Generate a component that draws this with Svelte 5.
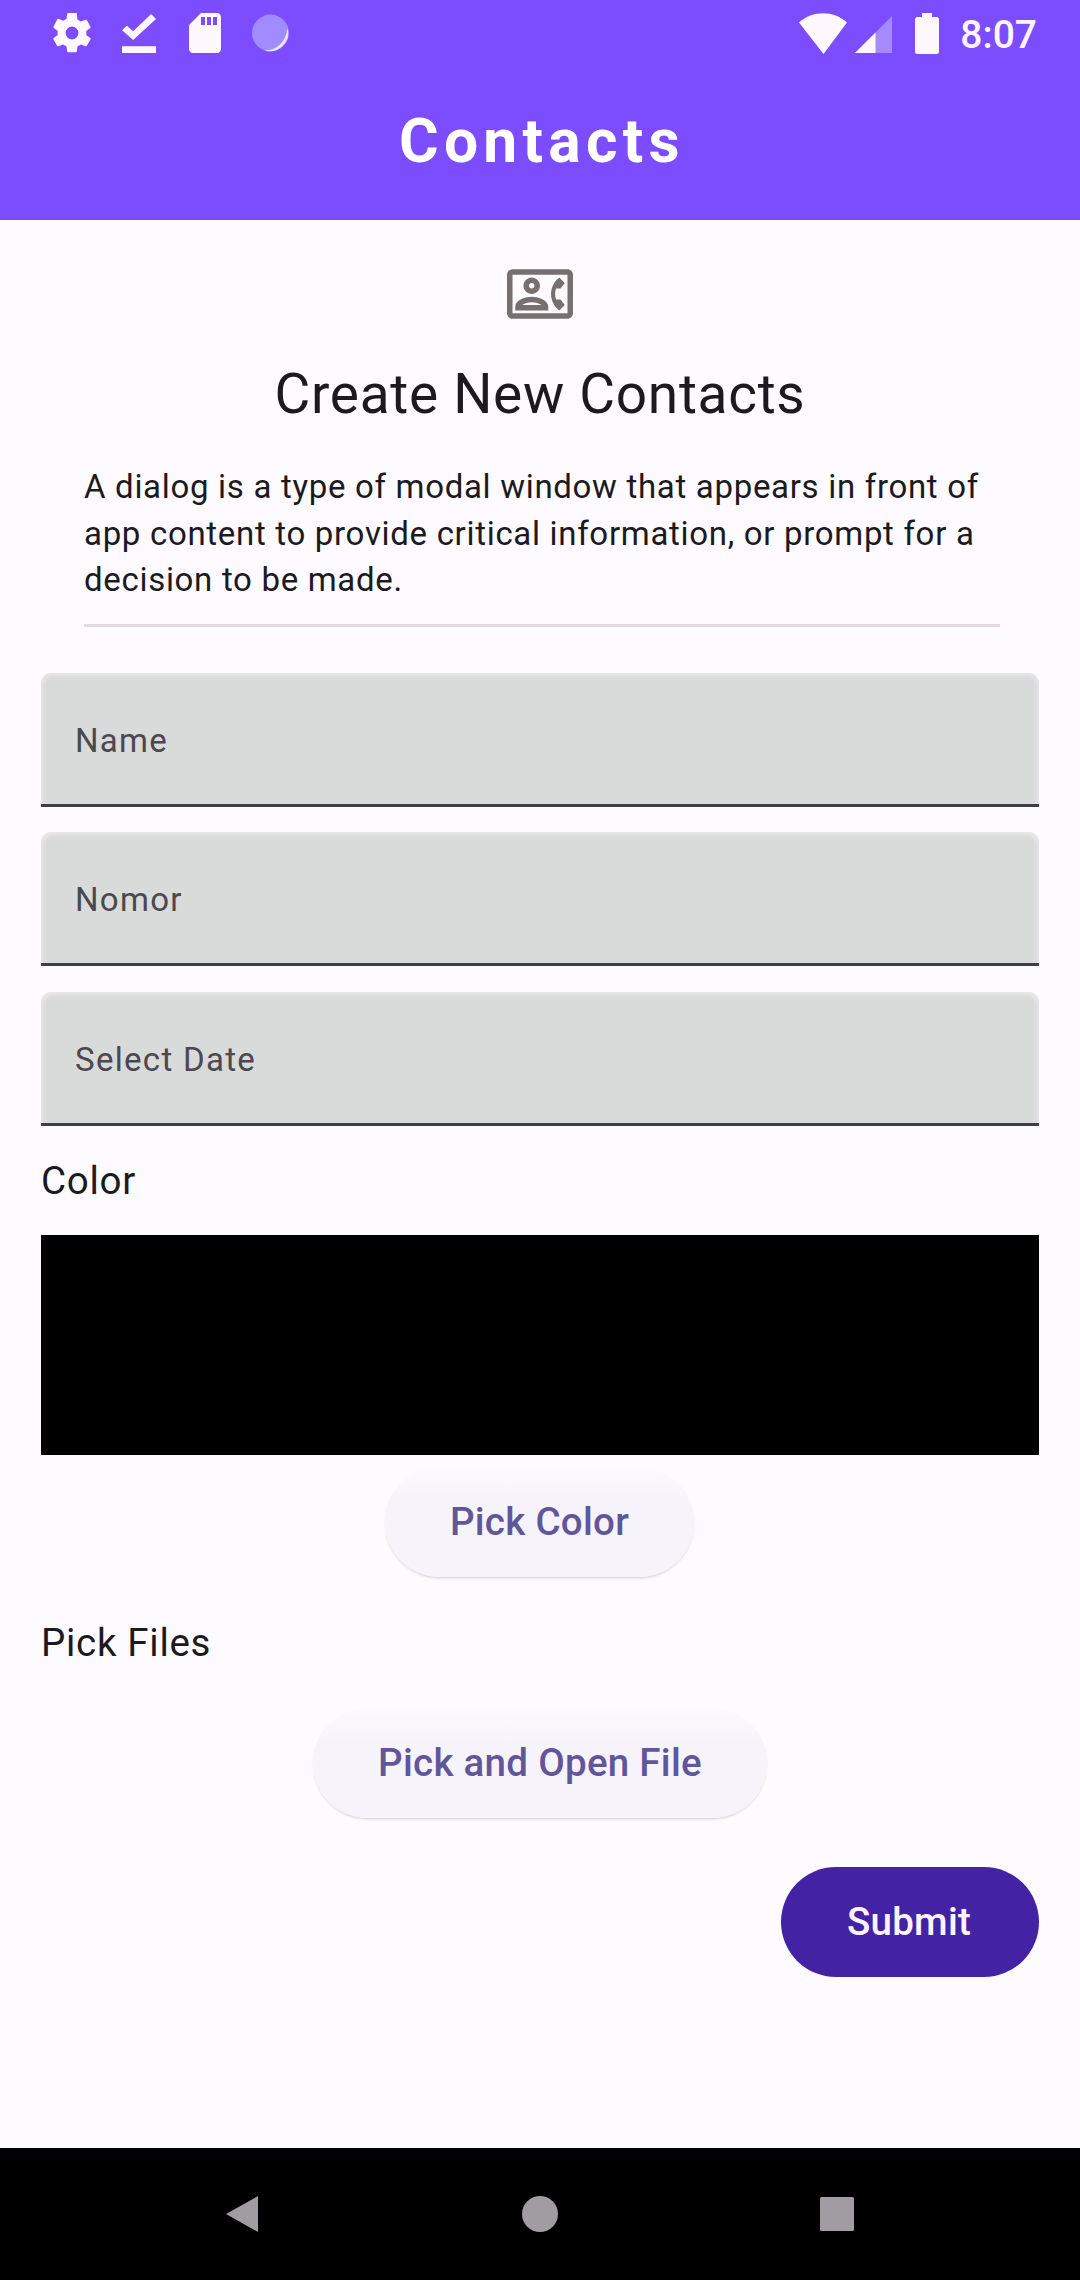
<script>
  const fields = ['Name', 'Nomor', 'Select Date'];
</script>

<div class="screen">
  <header>
    <div class="status">
      <div class="left">
        <svg class="gear" viewBox="0 0 24 24"><path fill-rule="evenodd" d="M19.14 12.94c.04-.3.06-.61.06-.94 0-.32-.02-.64-.07-.94l2.03-1.58a.49.49 0 0 0 .12-.61l-1.92-3.32a.49.49 0 0 0-.59-.22l-2.39.96a7 7 0 0 0-1.62-.94l-.36-2.54A.48.48 0 0 0 13.92 2h-3.84a.47.47 0 0 0-.47.41l-.36 2.54c-.59.24-1.13.57-1.62.94l-2.39-.96a.48.48 0 0 0-.59.22L2.74 8.87c-.12.21-.08.47.12.61l2.03 1.58c-.05.3-.09.63-.09.94s.02.64.07.94l-2.03 1.58a.49.49 0 0 0-.12.61l1.92 3.32c.12.22.37.29.59.22l2.39-.96c.5.38 1.03.7 1.62.94l.36 2.54c.05.24.24.41.48.41h3.84c.24 0 .44-.17.47-.41l.36-2.54c.59-.24 1.13-.56 1.62-.94l2.39.96c.22.08.47 0 .59-.22l1.92-3.32a.47.47 0 0 0-.12-.61l-2.01-1.58zM12 15.2a3.2 3.2 0 1 1 0-6.4 3.2 3.2 0 0 1 0 6.4z" /></svg>
        <svg class="done" viewBox="5 4 14 16"><path d="M5 17.300h14V20H5v-2.700zM9.600 14.700 5 10.700l2-1.900 2.600 2.300L17 4l2 2-9.400 8.700z" /></svg>
        <svg class="card" viewBox="4 2 16 20"><path fill-rule="evenodd" d="M18 2h-8L4.020 8 4 20c0 1.100.9 2 2 2h12c1.100 0 2-.9 2-2V4c0-1.100-.9-2-2-2zm-6 6h-2V4h2v4zm3 0h-2V4h2v4zm3 0h-2V4h2v4z" /></svg>
        <svg class="orb" viewBox="0 0 38 40"><circle cx="18.500" cy="20" r="18.500" fill="#a08cff" /><path fill="#efe6ff" d="M35.500 15a18.500 18.500 0 0 1-23 22.500C25 37.500 34 29 35.500 15z" /></svg>
      </div>
      <div class="right">
        <svg class="wifi" viewBox="0 0 48 41"><path d="M0 9.500C14-2.800 34-2.800 48 9.500L24.500 41z" /></svg>
        <svg class="signal" viewBox="0 0 37 37"><path fill="#a68aff" d="M37 0v37H0z" /><path d="M20.500 16.500V37H0z" /></svg>
        <svg class="battery" viewBox="0 0 24 41"><path d="M7 0h10v4h4.500Q24 4 24 6.500V38.500Q24 41 21.500 41h-19Q0 41 0 38.500V6.500Q0 4 2.500 4H7z" /></svg>
        <span class="time">8:07</span>
      </div>
    </div>
    <h1>Contacts</h1>
  </header>

  <main>
    <svg class="contact" viewBox="0 0 24 24"><path d="M22 3H2C.9 3 0 3.900 0 5v14c0 1.100.9 2 2 2h20c1.100 0 1.990-.9 1.990-2L24 5c0-1.100-.9-2-2-2zm0 16H2V5h20v14zm-2.990-1.010L21 16l-1.510-2h-1.640c-.22-.63-.35-1.300-.35-2s.13-1.370.35-2h1.640L21 8l-1.990-1.990c-1.310.98-2.280 2.370-2.730 3.990-.18.64-.28 1.310-.28 2s.1 1.360.28 2c.45 1.610 1.420 3.010 2.730 3.990zM9 12c1.650 0 3-1.350 3-3s-1.350-3-3-3-3 1.350-3 3 1.350 3 3 3zm0-4c.55 0 1 .45 1 1s-.45 1-1 1-1-.45-1-1 .45-1 1-1zm6 8.590c0-2.500-3.970-3.580-6-3.580s-6 1.080-6 3.580V18h12v-1.410zM5.480 16c.74-.5 2.220-1 3.520-1s2.770.49 3.520 1H5.480z" /></svg>
    <h2>Create New Contacts</h2>
    <p>A dialog is a type of modal window that appears in front of<br />app content to provide critical information, or prompt for a<br />decision to be made.</p>
    <hr />

    <div class="fields">
      {#each fields as label}
        <div class="field">{label}</div>
      {/each}
    </div>

    <div class="label color-label">Color</div>
    <div class="swatch"></div>
    <button class="tonal pick-color">Pick Color</button>
    <div class="label files-label">Pick Files</div>
    <button class="tonal pick-file">Pick and Open File</button>
    <button class="submit">Submit</button>
  </main>

  <nav>
    <svg viewBox="0 0 36 36"><path d="M34 0v36L2 18z" /></svg>
    <svg viewBox="0 0 36 36"><circle cx="18" cy="18" r="18" /></svg>
    <svg viewBox="0 0 36 36"><rect x="1" y="1" width="34" height="34" rx="1.500" /></svg>
  </nav>
</div>

<style>
  :global(body) { margin: 0; }
  .screen {
    width: 1080px;
    height: 2280px;
    display: flex;
    flex-direction: column;
    overflow: hidden;
    background: #fdfbff;
    color: #1c1a20;
    font-family: Roboto, sans-serif;
  }
  header { height: 220px; flex: none; background: #7c4cff; color: #fff; }
  .status { height: 66px; display: flex; justify-content: space-between; padding: 0 43px 0 48px; }
  .left, .right { display: flex; align-items: center; }
  .status svg { fill: #fff8ff; display: block; }
  .gear { width: 48px; height: 48px; }
  .done { width: 34px; height: 39px; margin-left: 26px; }
  .card { width: 32px; height: 40px; margin-left: 33px; }
  .orb { width: 38px; height: 40px; margin-left: 31px; }
  .wifi { width: 48px; height: 41px; }
  .signal { width: 37px; height: 37px; margin: 2px 0 0 8px; }
  .battery { width: 24px; height: 41px; margin-left: 23px; }
  .time { margin: 4px 0 0 21px; font-size: 39px; font-weight: 500; line-height: 46px; color: #fff4ff; }
  h1 {
    margin: 0;
    padding: 1px 0 0 4px;
    font-size: 60.5px;
    font-weight: 700;
    line-height: 150px;
    letter-spacing: 5.3px;
    text-align: center;
  }
  main { flex: 1; display: flex; flex-direction: column; padding: 41px 41px 0; }
  .contact { width: 66px; height: 66px; align-self: center; fill: #77706f; }
  h2 {
    margin: 34.5px 0 0;
    font-size: 55px;
    font-weight: 400;
    line-height: 64px;
    letter-spacing: 0.69px;
    text-align: center;
  }
  p {
    margin: 38.5px 0 0 43px;
    font-size: 33px;
    line-height: 46.5px;
    letter-spacing: 0.69px;
    white-space: nowrap;
  }
  hr { width: 916px; height: 3px; margin: 20.5px 0 0 43px; border: 0; background: #e3d9df; }
  .fields { margin-top: 45.5px; display: flex; flex-direction: column; gap: 25.5px; }
  .field {
    box-sizing: border-box;
    height: 134px;
    padding-left: 34px;
    border-bottom: 3px solid #3f3e45;
    border-radius: 11px 11px 0 0;
    background: #d9dada;
    box-shadow: inset 0 4px 5px -1px #e9e7e9, inset 4px 0 4px -2px #e5e3e5, inset -4px 0 4px -2px #e5e3e5;
    color: #4c4850;
    font-size: 33px;
    line-height: 135px;
    letter-spacing: 1.3px;
  }
  .label { font-size: 38.5px; line-height: 46px; letter-spacing: 0.7px; }
  .color-label { margin-top: 32px; }
  .swatch { height: 220px; margin-top: 31px; background: #000; }
  button {
    height: 110px;
    flex: none;
    padding: 0;
    border: 0;
    border-radius: 55px;
    font: 500 38.5px/110px Roboto, sans-serif;
    letter-spacing: 0.28px;
  }
  .tonal {
    align-self: center;
    background: linear-gradient(#fcfafe, #f7f3fb 30%);
    box-shadow: 0 2px 3px -1px #d0cbd5;
    color: #62569a;
  }
  .pick-color { width: 309px; margin: 12.5px 1px 0 0; }
  .files-label { margin-top: 42.5px; }
  .pick-file { width: 454px; margin-top: 42.5px; }
  .submit { align-self: flex-end; width: 258px; padding-right: 2px; margin-top: 49px; background: #4323a3; color: #fff3ff; }
  nav {
    height: 132px;
    flex: none;
    display: flex;
    align-items: center;
    justify-content: space-between;
    padding: 0 225px 0 224px;
    background: #000;
  }
  nav svg { width: 36px; height: 36px; fill: #a09ca2; }
</style>
